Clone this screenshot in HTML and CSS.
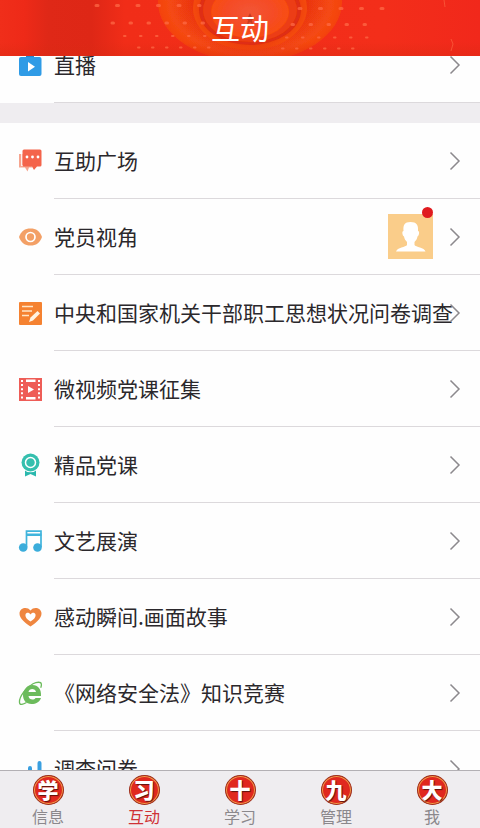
FILE: index.html
```html
<!DOCTYPE html>
<html lang="zh-CN">
<head>
<meta charset="utf-8">
<meta name="viewport" content="width=device-width, initial-scale=1">
<title>互动</title>
<link rel="stylesheet" href="styles.css">
</head>
<body>
<svg class="defs" aria-hidden="true">
  <symbol id="chevron" viewBox="0 0 12 20"><path d="M1.500 1.500 10 10l-8.500 8.500" fill="none" stroke="currentColor" stroke-width="1.500"/></symbol>
</svg>

<header class="header">
  <svg class="header-art" viewBox="0 0 480 56" preserveAspectRatio="xMidYMid slice" aria-hidden="true">
    <defs>
      <linearGradient id="red" x1="0" x2="1" y1="0" y2="0">
        <stop offset="0" stop-color="#f02e1a"/><stop offset=".05" stop-color="#ee2a18"/>
        <stop offset=".1" stop-color="#df2817"/><stop offset=".19" stop-color="#de2716"/>
        <stop offset=".26" stop-color="#f12d18"/><stop offset=".8" stop-color="#f32e1a"/><stop offset="1" stop-color="#f1281b"/>
      </linearGradient>
      <radialGradient id="outer"><stop offset=".6" stop-color="#ea3311"/><stop offset=".88" stop-color="#f54a12"/><stop offset="1" stop-color="#f4420f"/></radialGradient>
      <radialGradient id="middle"><stop offset=".7" stop-color="#e93512"/><stop offset="1" stop-color="#f44a10"/></radialGradient>
      <radialGradient id="inner"><stop offset="0" stop-color="#f25535"/><stop offset=".6" stop-color="#f54c26"/><stop offset="1" stop-color="#f84d10"/></radialGradient>
      <linearGradient id="shade" x1="0" x2="0" y1="0" y2="1">
        <stop offset=".75" stop-color="#d92a12" stop-opacity="0"/><stop offset="1" stop-color="#d92a12" stop-opacity=".4"/>
      </linearGradient>
      <filter id="soft"><feGaussianBlur stdDeviation="0.700"/></filter>
    </defs>
    <rect width="480" height="56" fill="url(#red)"/>
    <g filter="url(#soft)">
      <ellipse cx="250" cy="2" rx="92" ry="60" fill="url(#outer)"/>
      <ellipse cx="250" cy="8" rx="57" ry="42" fill="url(#middle)"/>
      <ellipse cx="250" cy="10" rx="51" ry="35" fill="#df2f12"/>
      <ellipse cx="250" cy="10" rx="47" ry="32" fill="#ec3d12"/>
      <ellipse cx="250" cy="12" rx="39" ry="26" fill="url(#inner)"/>
      <path d="M250 13l2 4 3 1-3 2 1 5-3-3-3 3 1-5-3-2 3-1z" fill="#c63a24"/>
    </g>
    <rect width="480" height="56" fill="url(#shade)"/>
    <g fill="none" stroke="#ff6d48" stroke-linecap="round" opacity=".7" filter="url(#soft)">
      <path d="M96 5.500H200M299 8.500H400" stroke-width="3" stroke-dasharray="2 18.500"/>
      <path d="M112 23H206M292 24.500H382" stroke-width="3" stroke-dasharray="1.500 16.500"/>
      <path d="M124 36H212M286 37.500H368" stroke-width="2" stroke-dasharray="1.500 14.500"/>
      <path d="M138 47.500H216M282 48.500H356" stroke-width="2" stroke-dasharray="1.500 12.500"/>
    </g>
    <path d="M444 0l1 7M451 39l2 5-2 7" fill="none" stroke="#ff7a50" opacity=".5"/>
  </svg>
  <h1 class="title">互动</h1>
</header>

<main class="content">
  <ul class="list list-scrolled">
    <li><a class="row" href="#">
      <svg class="icon" viewBox="0 0 24 24"><path d="M8 5V3h8v2" fill="#2787cf"/><rect x="1" y="4" width="22.500" height="19" rx="2" fill="#2f9be6"/><path d="M10 9v9.500l7-4.700z" fill="#fff"/></svg>
      <span class="cell"><span class="label">直播</span><svg class="chevron"><use href="#chevron"/></svg></span></a></li>
  </ul>

  <ul class="list">
    <li><a class="row" href="#">
      <svg class="icon" viewBox="0 0 24 24"><path d="M1 5v13.500h6L9.500 22.500l1.500-4h5.500V5z" fill="#f6a58f"/><path d="M3.800 4v12.500H14l2 4" fill="none" stroke="#fff" stroke-width="1.200"/><path d="M6 .5h16q1.500 0 1.500 1.500v14q0 1.500-1.500 1.500h-3l-3 3.500-2-3.500H6q-1.500 0-1.500-1.500V2Q4.500.5 6 .5z" fill="#f4644b"/><g fill="#fff"><circle cx="9" cy="8" r="1.400"/><circle cx="14.500" cy="8" r="1.400"/><circle cx="20" cy="8" r="1.400"/></g></svg>
      <span class="cell"><span class="label">互助广场</span><svg class="chevron"><use href="#chevron"/></svg></span></a></li>
    <li><a class="row" href="#">
      <svg class="icon" viewBox="0 0 24 24"><path d="M1 12C3 6 7 3.500 12.500 3.500S22 6 24 12c-2 6-6 8.500-11.500 8.500S3 18 1 12z" fill="#f3a066"/><circle cx="12.500" cy="12" r="4.500" fill="none" stroke="#fff" stroke-width="1.700"/></svg>
      <span class="cell"><span class="label">党员视角</span>
        <span class="avatar">
          <svg viewBox="0 0 45 45" aria-hidden="true"><rect width="45" height="45" fill="#facd8a"/><path d="M22.500 8c6 0 8 3 7.500 9 2 0 1 5-.5 5.500-.5 2.500-1.500 4-3 5.500v3c1 2 10 2.500 11 6.500H8c1-4 10-4.500 11-6.500v-3c-1.500-1.500-2.500-3-3-5.500-1.500-.5-2.500-5.500-.5-5.500C15 11 16.500 8 22.500 8z" fill="#fff"/></svg>
          <span class="dot"></span>
        </span>
        <svg class="chevron"><use href="#chevron"/></svg></span></a></li>
    <li><a class="row" href="#">
      <svg class="icon" viewBox="0 0 24 24"><rect x="1" y="1" width="23" height="23" rx="1" fill="#f58231"/><path d="M4 5.500h11M4 10h10M4 14.500h7" stroke="#ffe6c8" stroke-width="1.400"/><path d="M11 21l1.500-4.500 7-6.500 2.500 2.500-7 7z" fill="#fff3e2"/></svg>
      <span class="cell"><span class="label">中央和国家机关干部职工思想状况问卷调查</span><svg class="chevron"><use href="#chevron"/></svg></span></a></li>
    <li><a class="row" href="#">
      <svg class="icon" viewBox="0 0 24 24"><rect x="1" y="1" width="23" height="23" fill="#ee5d57"/><path d="M4 3v19.500M21 3v19.500" stroke="#fff" stroke-width="2" stroke-dasharray="2 2.100"/><path d="M8 2.500h9.500v2.500H8zM8 20h9.500v2.500H8z" fill="#fff"/><path d="M10 9v7l6-3.500z" fill="#fff"/></svg>
      <span class="cell"><span class="label">微视频党课征集</span><svg class="chevron"><use href="#chevron"/></svg></span></a></li>
    <li><a class="row" href="#">
      <svg class="icon" viewBox="0 0 24 24"><path d="M7 17h11v6.500l-5.500-2.500L7 23.500z" fill="#2ab8ad"/><circle cx="12.500" cy="9.500" r="9.800" fill="#fff"/><circle cx="12.500" cy="9.500" r="9" fill="#35bfae"/><circle cx="12.500" cy="9.500" r="5" fill="none" stroke="#fff" stroke-width="1.500"/></svg>
      <span class="cell"><span class="label">精品党课</span><svg class="chevron"><use href="#chevron"/></svg></span></a></li>
    <li><a class="row" href="#">
      <svg class="icon" viewBox="0 0 24 24"><path d="M8.500 18V2.200H23V18" fill="none" stroke="#40b4dc" stroke-width="1.700"/><path d="M8 4.500h15.500v2.500H8z" fill="#40b4dc"/><circle cx="5.200" cy="18.500" r="4.300" fill="#3baddb"/><circle cx="19.500" cy="18.500" r="4.300" fill="#3baddb"/></svg>
      <span class="cell"><span class="label">文艺展演</span><svg class="chevron"><use href="#chevron"/></svg></span></a></li>
    <li><a class="row" href="#">
      <svg class="icon" viewBox="0 0 24 24"><path d="M12.500 21.500C9 19 1 14 1.500 8 2 3 9 1 12.500 5.500 16 1 23 3 23.500 8c.5 6-7.500 11-11 13.500z" fill="#ef8640"/><path d="M12.500 16.500c-3-2-5.500-4-5-7 .5-2 3.500-2.500 5 0 1.500-2.500 4.500-2 5 0 .5 3-2 5-5 7z" fill="#fff"/></svg>
      <span class="cell"><span class="label">感动瞬间.画面故事</span><svg class="chevron"><use href="#chevron"/></svg></span></a></li>
    <li><a class="row" href="#">
      <svg class="icon" viewBox="0 0 24 24"><path fill-rule="evenodd" d="M23 15H10.500c.3 4 5.500 4.500 7 2H23c-1.500 4-5 6-9.500 6C8 23 5 19 5 14s4-10 9.500-10S23.500 8 23 15zM10.500 11H18c-.5-4-7-4-7.500 0z" fill="#6cbb5c"/><path d="M8.500 21.500c-4 2.500-7 2.500-7 0C1 16 8 6.500 15 2.800c4-2.100 8-2 8.300 0 .2 1 0 2.500-.6 4" fill="none" stroke="#6cbb5c" stroke-width="1.300"/></svg>
      <span class="cell"><span class="label">《网络安全法》知识竞赛</span><svg class="chevron"><use href="#chevron"/></svg></span></a></li>
    <li><a class="row" href="#">
      <svg class="icon" viewBox="0 0 24 24"><path d="M3.500 17v5M12 11v11M21.500 6v16" stroke="#3a9fe0" stroke-width="4" stroke-linecap="round"/></svg>
      <span class="cell"><span class="label">调查问卷</span><svg class="chevron"><use href="#chevron"/></svg></span></a></li>
  </ul>
</main>

<nav class="tabs">
  <a class="tab" href="#"><span class="seal">学</span><span>信息</span></a>
  <a class="tab tab-active" href="#" aria-current="page"><span class="seal">习</span><span>互动</span></a>
  <a class="tab" href="#"><span class="seal">十</span><span>学习</span></a>
  <a class="tab" href="#"><span class="seal">九</span><span>管理</span></a>
  <a class="tab" href="#"><span class="seal">大</span><span>我</span></a>
</nav>
</body>
</html>
```
FILE: styles.css
```css
* {
  box-sizing: border-box;
}

body {
  margin: 0;
  height: 100vh;
  display: flex;
  flex-direction: column;
  background: #efedf0;
  color: #2b282c;
  font-family: "Noto Sans CJK SC", sans-serif;
}

a {
  color: inherit;
  text-decoration: none;
}

.defs {
  position: absolute;
  width: 0;
  height: 0;
}

.header {
  position: relative;
  flex: none;
  height: 56px;
  display: flex;
  align-items: center;
  justify-content: center;
  overflow: hidden;
  padding-bottom: 2px;
  background: #f22d18;
}

.header-art {
  position: absolute;
  inset: 0;
  width: 100%;
  height: 100%;
}

.title {
  position: relative;
  margin: 0;
  color: #fff;
  font-size: 29px;
  line-height: 54px;
  font-weight: 400;
}

.content {
  flex: 1;
  min-height: 0;
  overflow: hidden;
}

.list {
  margin: 0 0 20px;
  padding: 0;
  list-style: none;
  background: #fefefe;
}

.list-scrolled {
  margin-top: -29px;
}

.row {
  display: flex;
  align-items: center;
  height: 76px;
  padding-left: 18px;
}

.icon {
  flex: none;
  width: 24px;
  height: 24px;
  margin-right: 12px;
}

.cell {
  flex: 1;
  min-width: 0;
  height: 100%;
  display: flex;
  align-items: center;
  padding-right: 19px;
  border-bottom: 1px solid #dcd9dc;
}

.label {
  flex: 1;
  min-width: 0;
  padding-bottom: 2px;
  white-space: nowrap;
  font-size: 21px;
  line-height: 32px;
}

.chevron {
  flex: none;
  width: 12px;
  height: 20px;
  color: #8c898d;
}

.avatar {
  position: relative;
  flex: none;
  width: 45px;
  height: 45px;
  margin-right: 16px;
}

.avatar svg {
  display: block;
  width: 100%;
  height: 100%;
}

.dot {
  position: absolute;
  top: -7px;
  right: 0;
  width: 11px;
  height: 11px;
  border-radius: 50%;
  background: #e01b1f;
}

.tabs {
  flex: none;
  display: flex;
  height: 58px;
  padding-top: 4px;
  border-top: 1px solid #b3b0b4;
  background: #efedf0;
}

.tab {
  flex: 1;
  display: flex;
  flex-direction: column;
  align-items: center;
  color: #8b888c;
  font-size: 16px;
  line-height: 23px;
}

.tab-active {
  color: #cf3236;
}

.seal {
  width: 31px;
  height: 31px;
  border: 1px solid #9c2f1c;
  border-radius: 50%;
  background: #e0281f;
  box-shadow: inset 0 0 0 1px #f0a04a;
  color: #fff;
  font-size: 21px;
  line-height: 27px;
  font-weight: 900;
  text-align: center;
  text-shadow: 1px 1px 1px #5c120c;
}
```
